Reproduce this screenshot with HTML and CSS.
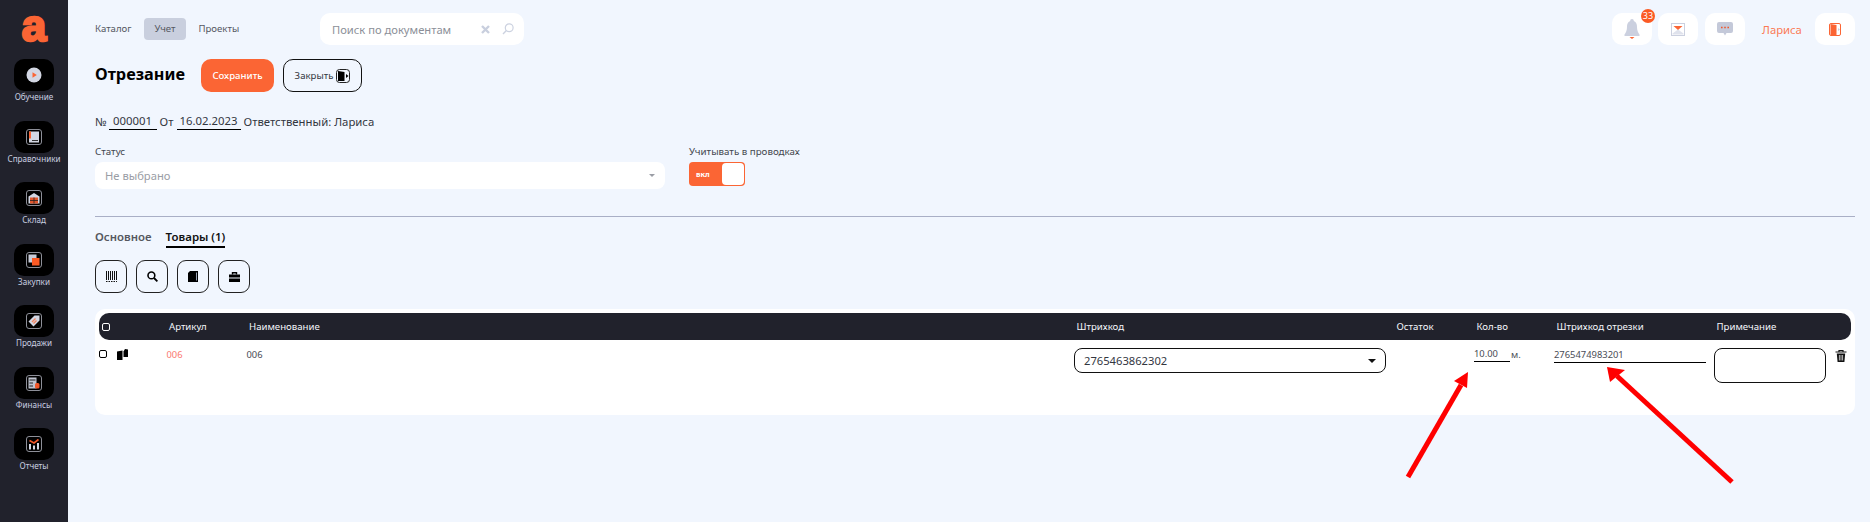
FILE: index.html
```html
<!DOCTYPE html>
<html lang="ru">
<head>
	<meta charset="UTF-8">
	<title>Отрезание</title>
	<link rel="stylesheet" href="styles.css">
</head>
<body>
<div class="app">
	<!-- Sidebar -->
	<aside class="sidebar">
		<div class="logo">a</div>
		<a class="side-item">
			<span class="side-tile">
				<svg width="16" height="16" viewBox="0 0 16 16"><circle cx="8" cy="8" r="7.5" fill="#d3d7e3"/><path d="M6.5 5.2 L10.8 8 L6.5 10.8 Z" fill="#fb6534"/></svg>
			</span>
			<span class="side-label">Обучение</span>
		</a>
		<a class="side-item">
			<span class="side-tile">
				<svg width="16" height="16" viewBox="0 0 16 16"><rect x=".5" y=".5" width="15" height="15" rx="2.5" fill="none" stroke="#8d8f98"/><rect x="3" y="2.5" width="10" height="11" fill="#d3d7e3"/><rect x="3" y="2.5" width="2" height="7" fill="#fb6534"/><rect x="6" y="11" width="6" height="1" fill="#333"/></svg>
			</span>
			<span class="side-label">Справочники</span>
		</a>
		<a class="side-item">
			<span class="side-tile">
				<svg width="16" height="16" viewBox="0 0 16 16"><rect x=".5" y=".5" width="15" height="15" rx="2.5" fill="none" stroke="#8d8f98"/><path d="M2.5 6.5 L8 3 L13.5 6.5 V13.5 H2.5 Z" fill="#d3d7e3"/><rect x="4" y="7.5" width="8" height="6" fill="#e0562c"/><path d="M4 10.5 H12 M8 7.5 V13.5" stroke="#222" stroke-width=".8"/></svg>
			</span>
			<span class="side-label">Склад</span>
		</a>
		<a class="side-item">
			<span class="side-tile">
				<svg width="16" height="16" viewBox="0 0 16 16"><rect x=".5" y=".5" width="15" height="15" rx="2.5" fill="none" stroke="#8d8f98"/><rect x="2.5" y="2.5" width="8" height="8" fill="#c9cdd9"/><rect x="6" y="6" width="7.5" height="7.5" fill="#fb5a24"/></svg>
			</span>
			<span class="side-label">Закупки</span>
		</a>
		<a class="side-item">
			<span class="side-tile">
				<svg width="16" height="16" viewBox="0 0 16 16"><rect x=".5" y=".5" width="15" height="15" rx="2.5" fill="none" stroke="#8d8f98"/><path d="M8.5 2.5 H13.5 V7.5 L7.5 13.5 L2.5 8.5 Z" fill="#d3d7e3"/><path d="M6 9 L9.5 5.5 M7.5 10.5 L10.5 7.5" stroke="#f2825d" stroke-width="1.4"/></svg>
			</span>
			<span class="side-label">Продажи</span>
		</a>
		<a class="side-item">
			<span class="side-tile">
				<svg width="16" height="16" viewBox="0 0 16 16"><rect x=".5" y=".5" width="15" height="15" rx="2.5" fill="none" stroke="#8d8f98"/><rect x="2.5" y="2.5" width="8" height="11" fill="#bfc3cf"/><path d="M3.5 5 H9.5 M3.5 8 H7 M3.5 11 H7" stroke="#222" stroke-width="1"/><rect x="9" y="8" width="4.5" height="5.5" rx="1.5" fill="#f0572a"/></svg>
			</span>
			<span class="side-label">Финансы</span>
		</a>
		<a class="side-item">
			<span class="side-tile">
				<svg width="16" height="16" viewBox="0 0 16 16"><rect x=".5" y=".5" width="15" height="15" rx="2.5" fill="none" stroke="#8d8f98"/><path d="M3 8 H5 V13.5 H3 Z M7 9.5 H9 V13.5 H7 Z M11 7 H13 V13.5 H11 Z" fill="#d3d7e3"/><path d="M3.5 4.5 L8 7 L12.5 3.5" fill="none" stroke="#f0572a" stroke-width="1.6"/></svg>
			</span>
			<span class="side-label">Отчеты</span>
		</a>
	</aside>

	<main class="main">
		<!-- Top bar -->
		<header class="topbar">
			<nav class="nav">
				<a class="nav-link">Каталог</a>
				<a class="nav-link active">Учет</a>
				<a class="nav-link">Проекты</a>
			</nav>
			<div class="search">
				<span class="search-text">Поиск по документам</span>
				<svg class="search-clear" width="9" height="9" viewBox="0 0 9 9"><path d="M1 1 L8 8 M8 1 L1 8" stroke="#c9cfde" stroke-width="2.4"/></svg>
				<svg class="search-icon" width="12" height="12" viewBox="0 0 12 12"><circle cx="7.2" cy="4.8" r="3.9" fill="none" stroke="#ccd2e0" stroke-width="1.2"/><path d="M4.4 7.6 L1 11" stroke="#ccd2e0" stroke-width="1.4"/></svg>
			</div>
			<div class="top-right">
				<div class="top-tile bell">
					<svg width="16" height="20" viewBox="0 0 16 20"><path d="M8 0 C9.2 0 9.8 .8 9.8 2 C12.4 3 13 5.4 13 8 C13 11 14 13.5 15.5 15.5 V17 H.5 V15.5 C2 13.5 3 11 3 8 C3 5.4 3.6 3 6.2 2 C6.2 .8 6.8 0 8 0 Z" fill="#cbd0df"/><path d="M5.5 18 H10.5 L8 20 Z" fill="#fb6534"/></svg>
					<span class="badge">33</span>
				</div>
				<div class="top-tile">
					<svg width="14" height="13" viewBox="0 0 14 13"><rect x=".5" y=".5" width="13" height="12" fill="#fff" stroke="#cbd0df"/><path d="M1.5 10.5 L7 6.5 L12.5 10.5 V11.5 H1.5 Z" fill="#dfe2ec"/><path d="M2.5 3 H11.5 L7 7 Z" fill="#fb6534"/></svg>
				</div>
				<div class="top-tile">
					<svg width="16" height="14" viewBox="0 0 16 14"><path d="M2 0 H14 A2 2 0 0 1 16 2 V9 A2 2 0 0 1 14 11 H9.5 L8 13.5 L6.5 11 H2 A2 2 0 0 1 0 9 V2 A2 2 0 0 1 2 0 Z" fill="#c4c9d9"/><path d="M4 5.5 H5.6 M7.2 5.5 H8.8 M10.4 5.5 H12" stroke="#f0572a" stroke-width="1.6"/></svg>
				</div>
				<span class="user-name">Лариса</span>
				<div class="top-tile">
					<svg width="12" height="13" viewBox="0 0 12 13"><rect x=".5" y=".5" width="11" height="12" rx="1.5" fill="#fff" stroke="#fb6534"/><path d="M1.5 1 L7.5 2 V12 H1.5 Z" fill="#fb6534"/><path d="M9 5 L11 6.5 L9 8 Z" fill="#cbd0df"/></svg>
				</div>
			</div>
		</header>

		<!-- Title -->
		<div class="title-row">
			<h1 class="title">Отрезание</h1>
			<button class="btn btn-save">Сохранить</button>
			<button class="btn btn-close">
				<span>Закрыть</span>
				<svg width="14" height="14" viewBox="0 0 14 14"><rect x=".5" y=".5" width="13" height="13" rx="3" fill="none" stroke="#222"/><path d="M2 2 L8.5 3 V12 H2 Z" fill="#000"/><path d="M10 5 L12.5 7 L10 9 Z" fill="#000"/></svg>
			</button>
		</div>

		<div class="doc-info">
			<span>№</span><span class="doc-field doc-num">000001</span>
			<span>От</span><span class="doc-field doc-date">16.02.2023</span>
			<span>Ответственный: Лариса</span>
		</div>

		<div class="form-row">
			<div class="field-status">
				<label class="field-label">Статус</label>
				<div class="select-status">
					<span>Не выбрано</span>
					<i class="caret caret-grey"></i>
				</div>
			</div>
			<div class="field-toggle">
				<label class="field-label">Учитывать в проводках</label>
				<div class="toggle">
					<span class="toggle-text">вкл</span>
					<span class="toggle-knob"></span>
				</div>
			</div>
		</div>

		<hr class="divider">

		<div class="tabs">
			<a class="tab">Основное</a>
			<a class="tab active">Товары (1)</a>
		</div>

		<div class="tools">
			<button class="tool-btn">
				<svg width="11" height="11" viewBox="0 0 11 11"><path d="M.5 0 V9 M2.5 0 V9 M4.5 0 V9 M6.5 0 V9 M8.5 0 V9 M10.5 0 V9" stroke="#111" stroke-width="1"/><path d="M0 10.5 H11" stroke="#111" stroke-width="1" stroke-dasharray="1.5 1"/></svg>
			</button>
			<button class="tool-btn">
				<svg width="11" height="11" viewBox="0 0 11 11"><circle cx="4.4" cy="4.4" r="3.4" fill="none" stroke="#000" stroke-width="1.6"/><path d="M7 7 L10.4 10.4" stroke="#000" stroke-width="1.8"/></svg>
			</button>
			<button class="tool-btn">
				<svg width="10" height="11" viewBox="0 0 10 11"><path d="M2 0 H10 V11 H0 V2 Z" fill="#000"/><path d="M8.5 1.5 V9.5" stroke="#9aa3b5" stroke-width="1"/></svg>
			</button>
			<button class="tool-btn">
				<svg width="11" height="10" viewBox="0 0 11 10"><path d="M3.5 2.5 V.8 H7.5 V2.5" fill="none" stroke="#000" stroke-width="1.4"/><rect y="2.5" width="11" height="3" fill="#000"/><rect y="6.5" width="11" height="3.5" fill="#000"/></svg>
			</button>
		</div>

		<!-- Goods table -->
		<section class="table-card">
			<div class="table-head table-grid">
				<div class="head-check"><i class="check check-light"></i></div>
				<div>Артикул</div>
				<div>Наименование</div>
				<div>Штрихкод</div>
				<div>Остаток</div>
				<div>Кол-во</div>
				<div>Штрихкод отрезки</div>
				<div>Примечание</div>
			</div>
			<div class="table-row table-grid">
				<div class="row-check">
					<i class="check"></i>
					<svg width="11" height="11" viewBox="0 0 11 11"><path d="M0 2.5 L5.5 1.5 V11 H0 Z" fill="#000"/><path d="M6.5 2.5 L8 0 L11 .5 V8 H6.5 Z" fill="#000"/></svg>
				</div>
				<div class="art">006</div>
				<div>006</div>
				<div>
					<div class="select-code">
						<span>2765463862302</span>
						<i class="caret"></i>
					</div>
				</div>
				<div></div>
				<div class="qty"><span class="line-input qty-input">10.00</span><span class="unit">м.</span></div>
				<div><span class="line-input code-input">2765474983201</span></div>
				<div class="note-cell">
					<div class="note"></div>
					<svg class="trash" width="12" height="12" viewBox="0 0 12 12"><path d="M4 1.5 V.5 H8 V1.5 M.5 2 H11.5" fill="none" stroke="#111" stroke-width="1.2"/><path d="M1.8 3.5 H10.2 L9.4 12 H2.6 Z" fill="#111"/><path d="M4.4 5 V10.5 M6 5 V10.5 M7.6 5 V10.5" stroke="#fff" stroke-width=".7"/></svg>
				</div>
			</div>
		</section>
	</main>

	<!-- Annotation arrows over the screenshot -->
	<svg class="arrows" width="1870" height="522" viewBox="0 0 1870 522">
		<path d="M1408 477 L1461 385" stroke="#f00" stroke-width="5" fill="none"/>
		<path d="M1468 372 L1467 388 L1454 381 Z" fill="#f00"/>
		<path d="M1732 482 L1617 376" stroke="#f00" stroke-width="5" fill="none"/>
		<path d="M1607 367 L1625 370 L1610 382 Z" fill="#f00"/>
	</svg>
</div>
</body>
</html>
```

FILE: styles.css
```css
html, body {
  margin: 0;
  padding: 0;
}

body {
  font-family: "Noto Sans", sans-serif;
  font-size: 11px;
  color: #33363f;
  background: #f1f6fe;
}

.app {
  position: relative;
  display: flex;
  width: 1870px;
  height: 522px;
  overflow: hidden;
}

/* Sidebar */
.sidebar {
  flex: none;
  width: 68px;
  background: #21222c;
  display: flex;
  flex-direction: column;
  align-items: center;
}

.logo {
  height: 59px;
  font-family: "Liberation Sans", sans-serif;
  font-weight: bold;
  font-size: 44px;
  line-height: 51px;
  color: #fb6534;
  -webkit-text-stroke: 2.5px #fb6534;
}

.side-item {
  display: flex;
  flex-direction: column;
  align-items: center;
  height: 61.5px;
}

.side-tile {
  display: flex;
  align-items: center;
  justify-content: center;
  width: 40px;
  height: 32px;
  background: #000;
  border-radius: 10px;
}

.side-label {
  font-size: 8.15px;
  line-height: 11px;
  color: #c9cfe0;
  white-space: nowrap;
}

/* Main */
.main {
  flex: 1;
  display: flex;
  flex-direction: column;
  padding: 13px 15px 0 27px;
  min-width: 0;
}

.topbar {
  display: flex;
  align-items: center;
  height: 32px;
}

.nav {
  display: flex;
  gap: 3px;
  width: 235px;
  margin-left: -10px;
  flex: none;
}

.nav-link {
  padding: 0 10px;
  height: 22px;
  line-height: 22px;
  font-size: 9.6px;
  color: #555862;
  border-radius: 4px;
}

.nav-link.active {
  background: #c9cfde;
}

.search {
  display: flex;
  align-items: center;
  width: 204px;
  height: 32px;
  box-sizing: border-box;
  padding: 0 10px 0 12px;
  background: #fff;
  border-radius: 10px;
}

.search-text {
  flex: 1;
  font-size: 11.2px;
  color: #8c8f98;
}

.search-clear {
  margin-right: 12px;
}

.top-right {
  margin-left: auto;
  display: flex;
  align-items: center;
}

.top-tile {
  position: relative;
  display: flex;
  align-items: center;
  justify-content: center;
  width: 40px;
  height: 32px;
  background: #fff;
  border-radius: 10px;
  margin-left: 6px;
}

.top-tile:nth-child(3) {
  margin-left: 7px;
}

.badge {
  position: absolute;
  right: -3px;
  top: -4px;
  width: 14px;
  height: 14px;
  border-radius: 50%;
  background: #fb5a24;
  color: #fff;
  font-size: 9px;
  line-height: 14px;
  text-align: center;
}

.user-name {
  margin: 0 6px 0 17px;
  width: 41px;
  font-size: 11.3px;
  color: #fb7a55;
}

.title-row {
  display: flex;
  align-items: center;
  height: 33px;
  margin-top: 14px;
}

.title {
  margin: 0 15px 4px 0;
  width: 91px;
  font-size: 16.3px;
  font-weight: 700;
  color: #000;
  white-space: nowrap;
}

.btn {
  height: 33px;
  font-family: inherit;
  font-size: 9.6px;
  border-radius: 10px;
  padding: 0;
}

.btn-save {
  width: 73px;
  background: #fb6534;
  color: #fff;
  border: 0;
  font-weight: 500;
}

.btn-close {
  display: flex;
  align-items: center;
  justify-content: center;
  gap: 3px;
  width: 79px;
  margin-left: 9px;
  background: transparent;
  border: 1px solid #111;
  color: #33363f;
}

.doc-info {
  display: flex;
  align-items: center;
  margin-top: 19px;
  height: 20px;
  font-size: 11.35px;
  color: #33363f;
}

.doc-field {
  border-bottom: 1px solid #000;
  line-height: 17px;
  text-align: center;
}

.doc-num {
  width: 48px;
  margin: 0 3px 0 2px;
}

.doc-date {
  width: 64px;
  margin: 0 3px;
}

.form-row {
  display: flex;
  margin-top: 14px;
}

.field-label {
  display: block;
  font-size: 9.75px;
  line-height: 14px;
  color: #44474f;
  margin-bottom: 3px;
}

.field-status {
  width: 570px;
  margin-right: 24px;
}

.select-status {
  display: flex;
  align-items: center;
  justify-content: space-between;
  height: 27px;
  padding: 0 10px;
  background: #fff;
  border-radius: 8px;
  font-size: 11.2px;
  color: #9a9da5;
}

.toggle {
  display: flex;
  align-items: center;
  width: 56px;
  height: 24px;
  box-sizing: border-box;
  background: #fb6534;
  border-radius: 4px;
  padding: 1px;
  justify-content: space-between;
}

.toggle-text {
  padding-left: 6px;
  font-size: 7.5px;
  font-weight: 700;
  color: #fff;
}

.toggle-knob {
  width: 22px;
  height: 22px;
  background: #fff;
  border-radius: 4px;
}

.caret {
  width: 0;
  height: 0;
  border-left: 4px solid transparent;
  border-right: 4px solid transparent;
  border-top: 4px solid #111;
}

.caret-grey {
  border-left-width: 3.5px;
  border-right-width: 3.5px;
  border-top: 3.5px solid #9a9da5;
}

.divider {
  margin: 27px 0 0;
  border: 0;
  border-top: 1px solid #a9afc6;
}

.tabs {
  display: flex;
  gap: 14px;
  margin-top: 11px;
}

.tab {
  height: 20px;
  line-height: 17px;
  font-size: 11.45px;
  font-weight: 600;
  color: #55585f;
  box-sizing: border-box;
}

.tab.active {
  color: #111;
  border-bottom: 2px solid #000;
}

.tools {
  display: flex;
  gap: 9px;
  margin-top: 12px;
}

.tool-btn {
  display: flex;
  align-items: center;
  justify-content: center;
  width: 32px;
  height: 33px;
  padding: 0;
  background: transparent;
  border: 1px solid #222;
  border-radius: 9px;
}

/* Table */
.table-card {
  margin-top: 16px;
  padding: 4px;
  height: 106px;
  box-sizing: border-box;
  background: #fff;
  border-radius: 10px;
}

.table-grid {
  display: grid;
  grid-template-columns: 67.5px 80px 827.5px 320px 80px 80px 160px 1fr;
}

.table-head {
  height: 27px;
  line-height: 27px;
  background: #21222c;
  border-radius: 10px;
  color: #f4f6fb;
  font-size: 9.65px;
}

.table-head > div {
  padding-left: 2.5px;
}

.head-check {
  display: flex;
  align-items: center;
}

.check {
  display: block;
  box-sizing: border-box;
  width: 8px;
  height: 8px;
  border: 1px solid #000;
  border-radius: 2px;
}

.check-light {
  border-color: #fff;
}

.table-row {
  padding-top: 8px;
  font-size: 9.4px;
  color: #4a4d56;
}

.row-check {
  display: flex;
  gap: 10px;
  align-items: flex-start;
  padding-top: 2px;
}

.row-check svg {
  margin-top: -1px;
}

.table-row > .art {
  color: #fb7a72;
}

.table-row > div:not(.row-check) {
  line-height: 14px;
}

.select-code {
  display: flex;
  align-items: center;
  justify-content: space-between;
  width: 312px;
  height: 25px;
  box-sizing: border-box;
  padding: 0 9px;
  border: 1px solid #111;
  border-radius: 8px;
  font-size: 11.2px;
  color: #33363f;
}

.line-input {
  display: inline-block;
  border-bottom: 1px solid #000;
  box-sizing: border-box;
  height: 14px;
  line-height: 12px;
}

.qty {
  display: flex;
}

.qty-input {
  width: 36px;
}

.unit {
  padding-left: 1px;
}

.code-input {
  width: 152px;
}

.note-cell {
  display: flex;
  align-items: flex-start;
}

.note {
  width: 112px;
  height: 35px;
  box-sizing: border-box;
  border: 1px solid #111;
  border-radius: 8px;
}

.trash {
  margin: 2px 0 0 9px;
}

/* Arrows drawn over the page */
.arrows {
  position: absolute;
  left: 0;
  top: 0;
  pointer-events: none;
}
```
